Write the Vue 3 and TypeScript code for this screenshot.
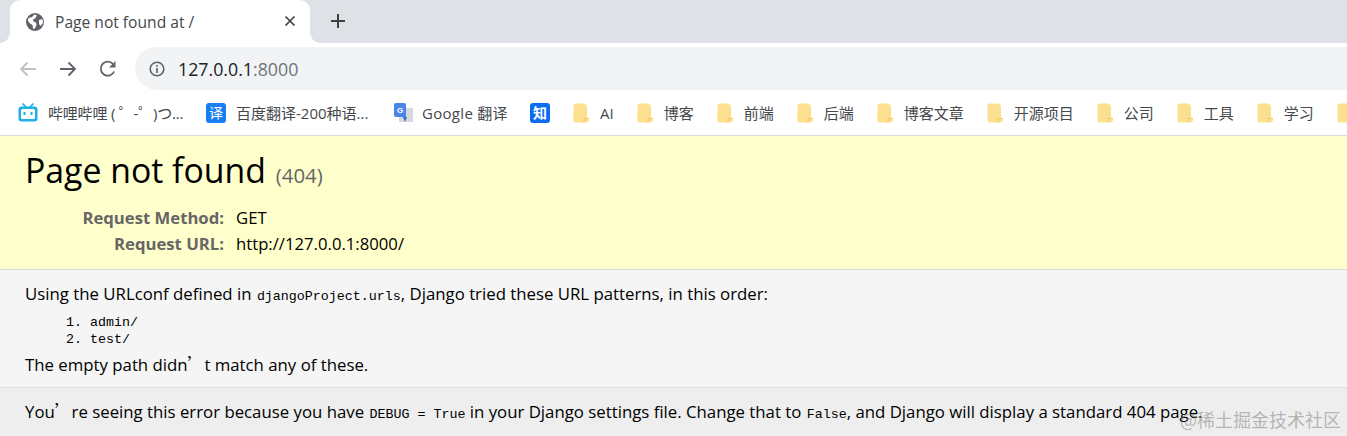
<script setup lang="ts">
const folders = ['AI', '博客', '前端', '后端', '博客文章', '开源项目', '公司', '工具', '学习', '']
</script>

<template>
  <div class="page">
    <div class="tabstrip">
      <div class="tab">
        <svg class="globe" width="18" height="18" viewBox="0 0 18 18">
          <circle cx="9" cy="9" r="9" fill="#5f6368" />
          <path d="M2 5.5 L6 4 L8.5 1.5 L11 2.5 L9.5 5 L7 6.5 L7.5 8.5 L10 9.5 L10.5 12 L8.5 16 L7 15.5 L6.5 12 L4 10.5 L2 8 Z" fill="#fff" />
          <path d="M13 7 L16.5 6 L17 10 L14.5 13 L13 11 Z" fill="#fff" />
        </svg>
        <span class="tab-title">Page not found at /</span>
        <svg class="tab-close" width="12" height="12" viewBox="0 0 12 12">
          <path d="M1.5 1.5 L10.5 10.5 M10.5 1.5 L1.5 10.5" stroke="#3c4043" stroke-width="1.7" />
        </svg>
      </div>
      <svg class="new-tab" width="16" height="16" viewBox="0 0 16 16">
        <path d="M8 1 V15 M1 8 H15" stroke="#3c4043" stroke-width="2" />
      </svg>
    </div>

    <div class="toolbar">
      <svg class="nav back" width="20" height="20" viewBox="0 0 20 20">
        <path d="M18 10 H3 M9.5 3.5 L3 10 L9.5 16.5" fill="none" stroke="#bdc1c6" stroke-width="1.8" />
      </svg>
      <svg class="nav forward" width="20" height="20" viewBox="0 0 20 20">
        <path d="M2 10 H17 M10.5 3.5 L17 10 L10.5 16.5" fill="none" stroke="#5f6368" stroke-width="1.8" />
      </svg>
      <svg class="nav reload" width="20" height="20" viewBox="0 0 20 20">
        <path d="M16.2 12.5 A7 7 0 1 1 15 5" fill="none" stroke="#5f6368" stroke-width="1.8" />
        <path d="M17.5 2 V8.5 H11 Z" fill="#5f6368" />
      </svg>
      <div class="omnibox">
        <svg width="16" height="16" viewBox="0 0 16 16">
          <circle cx="8" cy="8" r="6.8" fill="none" stroke="#5f6368" stroke-width="1.6" />
          <path d="M8 7 V12 M8 4 V5.8" stroke="#5f6368" stroke-width="1.7" />
        </svg>
        <span class="url"><span class="host">127.0.0.1</span>:8000</span>
      </div>
    </div>

    <div class="bookmarks">
      <div class="bm bili">
        <svg width="20" height="20" viewBox="0 0 20 20">
          <path d="M5 1 L8 4 M15 1 L12 4" stroke="#20b0e3" stroke-width="1.7" stroke-linecap="round" />
          <rect x="0.5" y="3.5" width="19" height="15" rx="3" fill="#20b0e3" />
          <rect x="3" y="6" width="14" height="10" rx="1.5" fill="#fff" />
          <rect x="5.5" y="9" width="2" height="3" fill="#20b0e3" />
          <rect x="12.5" y="9" width="2" height="3" fill="#20b0e3" />
        </svg>
        <span>哔哩哔哩 ( ゜-゜)つ...</span>
      </div>
      <div class="bm baidu">
        <div class="square blue">译</div>
        <span>百度翻译-200种语...</span>
      </div>
      <div class="bm google">
        <svg width="20" height="20" viewBox="0 0 20 20">
          <rect x="6" y="5" width="14" height="14" fill="#d5d8dc" />
          <path d="M1 2 Q1 0 3 0 H11 Q13 0 13 2 V14 H3 Q1 14 1 12 Z" fill="#4a86e8" />
          <path d="M10 14 L12 19 L14 14 Z" fill="#3b6cc4" />
          <text x="4" y="10" font-size="8" font-weight="700" fill="#fff" font-family="'Liberation Sans', sans-serif">G</text>
        </svg>
        <span>Google 翻译</span>
      </div>
      <div class="bm zhihu">
        <div class="square blue zhi">知</div>
      </div>
      <div v-for="(name, i) in folders" :key="i" class="bm folder">
        <svg width="16" height="20" viewBox="0 0 16 20">
          <path d="M1.5 0.5 H10 Q14 0.5 14 4 V15 H16 V16 Q16 19.5 13 19.5 H2.5 Q0.5 19.5 0.5 17.5 V2.5 Q0.5 0.5 2.5 0.5 Z" fill="#fde08f" />
          <path d="M11 19.5 V15.5 H16" fill="none" stroke="#f4c95d" stroke-width="1" />
        </svg>
        <span v-if="name">{{ name }}</span>
      </div>
    </div>

    <section class="summary">
      <h1>Page not found <span>(404)</span></h1>
      <div class="meta">
        <div class="k">Request Method:</div>
        <div class="v">GET</div>
        <div class="k">Request URL:</div>
        <div class="v">http://127.0.0.1:8000/</div>
      </div>
    </section>

    <section class="info">
      <p>Using the URLconf defined in <code>djangoProject.urls</code>, Django tried these URL patterns, in this order:</p>
      <ol>
        <li>admin/</li>
        <li>test/</li>
      </ol>
      <p>The empty path didn<span class="cjk">’</span>t match any of these.</p>
    </section>

    <section class="explanation">
      <p>You<span class="cjk">’</span>re seeing this error because you have <code>DEBUG = True</code> in your Django settings file. Change that to <code>False</code>, and Django will display a standard 404 page.</p>
    </section>

    <div class="watermark">@稀土掘金技术社区</div>
  </div>
</template>

<style>
html, body {
  margin: 0;
  background: #fff;
  overflow: hidden;
}
</style>

<style scoped>
.page {
  position: relative;
  width: 1347px;
  height: 436px;
  overflow: hidden;
  font-family: "Open Sans", "Noto Sans CJK SC", sans-serif;
  color: #000;
}

.tabstrip {
  height: 43px;
  background: #dee1e6;
  display: flex;
  align-items: flex-start;
  padding-left: 10px;
  box-sizing: border-box;
}

.tab {
  position: relative;
  width: 300px;
  height: 43px;
  background: #fff;
  border-radius: 10px 10px 0 0;
  display: flex;
  align-items: center;
  padding: 0 14px 0 16px;
  box-sizing: border-box;
}

/* the flared feet at the bottom of the active tab */
.tab::before,
.tab::after {
  content: "";
  position: absolute;
  bottom: 0;
  width: 10px;
  height: 10px;
}
.tab::before {
  left: -10px;
  background: radial-gradient(circle at 0 0, transparent 9.5px, #fff 10px);
}
.tab::after {
  right: -10px;
  background: radial-gradient(circle at 100% 0, transparent 9.5px, #fff 10px);
}

.tab-title {
  margin-left: 11px;
  font-size: 15.6px;
  color: #45484c;
  flex: 1;
}

.tab-close { margin-top: -2px; }

.new-tab {
  margin: 13px 0 0 20px;
}

.toolbar {
  height: 51px;
  display: flex;
  align-items: center;
  padding-left: 18px;
  background: #fff;
  box-sizing: border-box;
}

.nav { flex: none; }
.forward { margin-left: 20px; }
.reload { margin-left: 20px; }

.omnibox {
  margin-left: 17px;
  flex: 1;
  height: 43px;
  border-radius: 22px 0 0 22px;
  background: #f1f3f4;
  display: flex;
  align-items: center;
  padding-left: 14px;
  gap: 13px;
}

.url {
  font-size: 17.8px;
  color: #70757a;
}
.host { color: #202124; }

.bookmarks {
  height: 37px;
  padding: 0 0 4px 18px;
  display: flex;
  align-items: center;
  white-space: nowrap;
  font-size: 15px;
  color: #45484c;
  border-bottom: 1px solid #dadce0;
}

.bm {
  display: flex;
  align-items: center;
  gap: 10px;
  flex: none;
  margin-right: 20px;
}
.bili span { width: 138px; letter-spacing: -0.2px; }
.baidu span { width: 137px; }
.google { gap: 9px; }
.google span { width: 88px; letter-spacing: 0.3px; }
.zhihu { margin-right: 22px; }
.folder { gap: 12px; margin-right: 22px; }
.folder svg { margin-left: 1px; margin-right: -1px; }

.square {
  width: 20px;
  height: 20px;
  border-radius: 3px;
  background: #1a7ef2;
  color: #fff;
  font-size: 14px;
  line-height: 20px;
  text-align: center;
}
.zhi { background: #0a6cf0; font-weight: 700; }

.summary {
  background: #ffc;
  height: 134px;
  padding: 14px 25px 0;
  box-sizing: border-box;
  border-bottom: 1px solid #ddd;
}

h1 {
  margin: 0;
  font-size: 33.8px;
  font-weight: 400;
  line-height: 40px;
  color: #000;
}
h1 span {
  font-size: 20.4px;
  margin-left: 1px;
  color: #666;
}

.meta {
  display: grid;
  grid-template-columns: 199px auto;
  column-gap: 12px;
  justify-content: start;
  margin-top: 10px;
  font-size: 16.7px;
  line-height: 26px;
}
.k {
  font-weight: 700;
  color: #666;
  text-align: right;
}

.info {
  background: #f5f5f5;
  height: 118px;
  padding: 14px 25px 0;
  box-sizing: border-box;
  border-bottom: 1px solid #ddd;
  font-size: 16.8px;
}

p {
  margin: 0;
  line-height: 20px;
  white-space: nowrap;
}

.cjk {
  font-family: "Noto Sans CJK SC", sans-serif;
  line-height: 1;
}

code, ol {
  font-family: "Liberation Mono", monospace;
}
code { font-size: 13.33px; margin-left: 1px; }

ol {
  margin: 7px 0 7px;
  padding-left: 65px;
  font-size: 13.33px;
  line-height: 17px;
}

.explanation {
  background: #eee;
  height: 48px;
  padding: 14px 25px 0;
  box-sizing: border-box;
  font-size: 16.8px;
}

.watermark {
  position: absolute;
  right: 6px;
  top: 407px;
  font-size: 18px;
  line-height: 24px;
  color: rgba(130, 130, 130, 0.55);
  font-family: "Noto Sans CJK SC", sans-serif;
  white-space: nowrap;
}
</style>
